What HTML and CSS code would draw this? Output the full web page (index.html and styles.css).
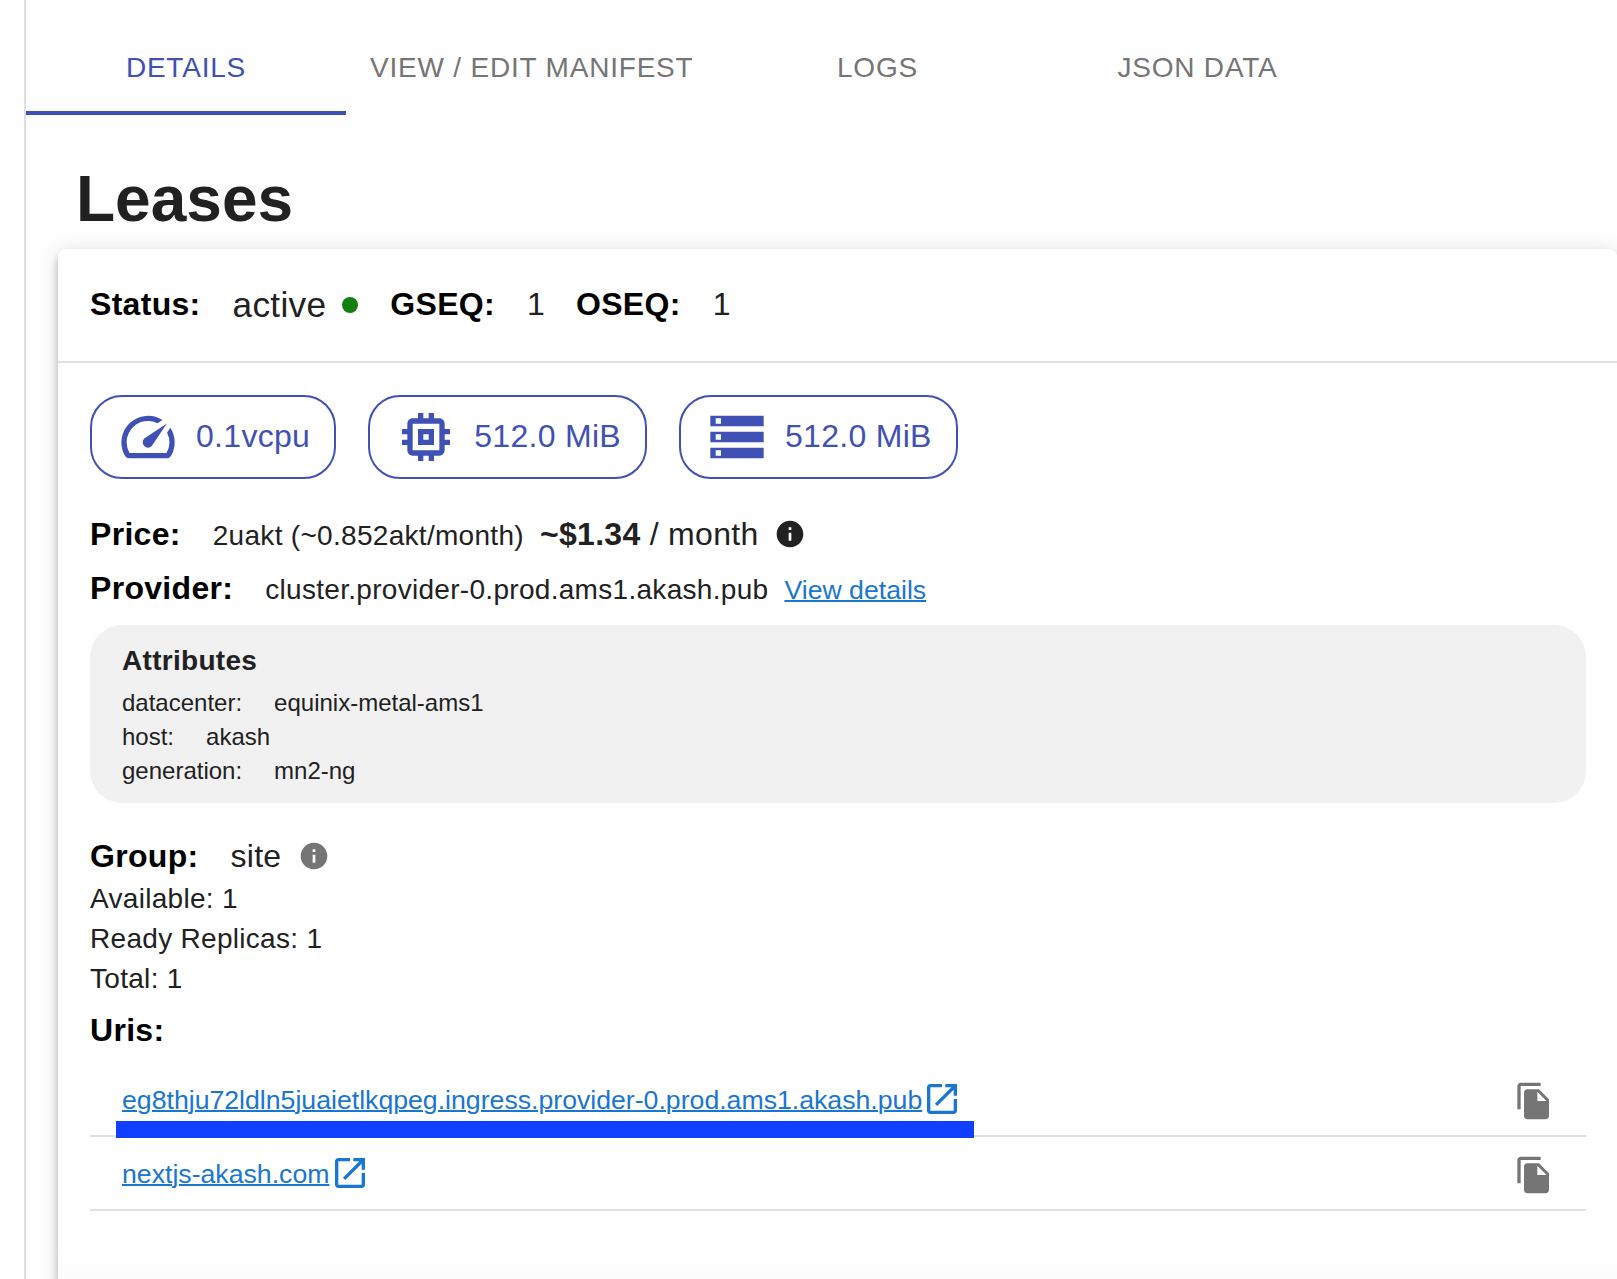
FILE: index.html
```html
<!DOCTYPE html>
<html lang="en">
<head>
<meta charset="utf-8">
<title>Leases</title>
<link rel="stylesheet" href="styles.css">
</head>
<body>
<svg class="sprite" aria-hidden="true">
  <symbol id="speed" viewBox="0 0 24 24"><path d="M20.38 8.57l-1.23 1.85a8 8 0 0 1-.22 7.58H5.07A8 8 0 0 1 15.58 6.85l1.85-1.23A10 10 0 0 0 3.35 19a2 2 0 0 0 1.72 1h13.85a2 2 0 0 0 1.74-1 10 10 0 0 0-.27-10.44zm-9.79 6.84a2 2 0 0 0 2.83 0l5.66-8.49-8.49 5.66a2 2 0 0 0 0 2.83z"/></symbol>
  <symbol id="memory" viewBox="0 0 24 24"><path d="M15 9H9v6h6V9zm-2 4h-2v-2h2v2zm8-2V9h-2V7c0-1.1-.9-2-2-2h-2V3h-2v2h-2V3H9v2H7c-1.1 0-2 .9-2 2v2H3v2h2v2H3v2h2v2c0 1.1.9 2 2 2h2v2h2v-2h2v2h2v-2h2c1.1 0 2-.9 2-2v-2h2v-2h-2v-2h2zm-4 6H7V7h10v10z"/></symbol>
  <symbol id="storage" viewBox="0 0 24 24"><path d="M2 20h20v-4H2v4zm2-3h2v2H4v-2zM2 4v4h20V4H2zm4 3H4V5h2v2zm-4 7h20v-4H2v4zm2-3h2v2H4v-2z"/></symbol>
  <symbol id="info" viewBox="0 0 24 24"><path d="M12 2C6.48 2 2 6.48 2 12s4.48 10 10 10 10-4.48 10-10S17.52 2 12 2zm1 15h-2v-6h2v6zm0-8h-2V7h2v2z"/></symbol>
  <symbol id="open" viewBox="0 0 24 24"><path d="M19 19H5V5h7V3H5c-1.11 0-2 .9-2 2v14c0 1.1.89 2 2 2h14c1.1 0 2-.9 2-2v-7h-2v7zM14 3v2h3.59l-9.83 9.83 1.41 1.41L19 6.41V10h2V3h-7z"/></symbol>
  <symbol id="copy" viewBox="0 0 24 24"><path d="M16 1H4c-1.1 0-2 .9-2 2v14h2V3h12V1zm-1 4l6 6v10c0 1.1-.9 2-2 2H7.99C6.89 23 6 22.1 6 21l.01-14c0-1.1.89-2 1.99-2h7zm-1 7h5.5L14 6.500V12z"/></symbol>
</svg>
<main class="panel">
  <nav class="tabs">
    <div class="tab tab-active">DETAILS</div>
    <div class="tab tab-wide">VIEW / EDIT MANIFEST</div>
    <div class="tab">LOGS</div>
    <div class="tab">JSON DATA</div>
  </nav>
  <h1 class="title">Leases</h1>
  <section class="card">
    <header class="card-header">
      <span class="label status-label">Status:</span><span class="status-value">active</span><span class="dot"></span>
      <span class="label">GSEQ:</span><span class="seq">1</span>
      <span class="label">OSEQ:</span><span class="seq">1</span>
    </header>
    <div class="card-body">
      <div class="chips">
        <div class="chip"><svg class="chip-icon"><use href="#speed"/></svg><span class="chip-text">0.1vcpu</span></div>
        <div class="chip"><svg class="chip-icon"><use href="#memory"/></svg><span class="chip-text">512.0 MiB</span></div>
        <div class="chip"><svg class="chip-icon"><use href="#storage"/></svg><span class="chip-text">512.0 MiB</span></div>
      </div>
      <div class="row">
        <span class="label">Price:</span><span class="value">2uakt (~0.852akt/month)</span><span class="cost"><b>~$1.34</b> / month</span><svg class="info info-dark"><use href="#info"/></svg>
      </div>
      <div class="row">
        <span class="label">Provider:</span><span class="value">cluster.provider-0.prod.ams1.akash.pub</span><a class="link details-link">View details</a>
      </div>
      <div class="attributes">
        <div class="attributes-title">Attributes</div>
        <div class="attribute"><span>datacenter:</span><span>equinix-metal-ams1</span></div>
        <div class="attribute"><span>host:</span><span>akash</span></div>
        <div class="attribute"><span>generation:</span><span>mn2-ng</span></div>
      </div>
      <div class="row group-row">
        <span class="label">Group:</span><span class="group-name">site</span><svg class="info info-muted"><use href="#info"/></svg>
      </div>
      <div class="counts">
        <div>Available: 1</div>
        <div>Ready Replicas: 1</div>
        <div>Total: 1</div>
      </div>
      <div class="label uris-label">Uris:</div>
      <ul class="uris">
        <li class="uri"><a class="link">eg8thju72ldln5juaietlkqpeg.ingress.provider-0.prod.ams1.akash.pub</a><svg class="open-icon"><use href="#open"/></svg><svg class="copy-icon"><use href="#copy"/></svg><span class="marker"></span></li>
        <li class="uri"><a class="link">nextjs-akash.com</a><svg class="open-icon"><use href="#open"/></svg><svg class="copy-icon"><use href="#copy"/></svg></li>
      </ul>
    </div>
  </section>
</main>
</body>
</html>
```
FILE: styles.css
```css
* { box-sizing: border-box; }
html { overflow: hidden; }
body {
  margin: 0;
  height: 1279px;
  overflow: hidden;
  background: #fefefe;
  color: #212121;
  font-family: "Liberation Sans", Arial, sans-serif;
  font-size: 32px;
  letter-spacing: 0.3px;
}
svg { display: block; flex: none; fill: currentColor; }
.sprite { position: absolute; width: 0; height: 0; }

.panel {
  margin-left: 24px;
  height: 1279px;
  padding-top: 19px;
  border-left: 2px solid #e0e0e0;
}
.tabs { display: flex; height: 96px; }
.tab {
  width: 320px;
  line-height: 98px;
  text-align: center;
  color: #757575;
  font-size: 28px;
  letter-spacing: 0.8px;
}
.tab-wide { width: 371.5px; }
.tab-active { color: #3f51b5; border-bottom: 4px solid #3f51b5; }

.title {
  margin: 46px 0 12px 50px;
  font-size: 64px;
  line-height: 76px;
  font-weight: 700;
  letter-spacing: 0;
}

.card {
  margin-left: 32px;
  height: 1100px;
  background: linear-gradient(#fff 1000px, #fcfcfc 1030px);
  border-radius: 8px;
  box-shadow: 0 4px 8px -2px rgba(0,0,0,.2), 0 8px 10px rgba(0,0,0,.14), 0 2px 20px rgba(0,0,0,.12);
}
.card-header {
  display: flex;
  align-items: center;
  height: 114px;
  padding-left: 32px;
  border-bottom: 2px solid #e0e0e0;
}
.label { color: #000; font-weight: 700; margin-right: 32px; }
.card-header .label, .seq { padding-bottom: 2px; }
.status-value { font-size: 35.2px; }
.dot { width: 16px; height: 16px; margin: 0 32px 0 16px; border-radius: 50%; background: #118011; }
.seq { margin: 0 31px 0 0; }

.card-body { padding: 32px 31px 0 32px; }
.chips { display: flex; gap: 32px; margin-bottom: 28px; }
.chip {
  display: flex;
  align-items: center;
  height: 84px;
  padding: 0 24px;
  border: 2px solid #3f51b5;
  border-radius: 32px;
  color: #3f51b5;
}
.chip-icon { width: 64px; height: 64px; margin-right: 16px; }
.chip-text { padding-bottom: 2px; }

.row { display: flex; align-items: baseline; height: 54px; line-height: 54px; }
.value { font-size: 28px; margin-right: 16px; }
.info { width: 32px; height: 32px; align-self: center; }
.info-dark { color: #212121; margin-left: 15px; }
.info-muted { color: #757575; margin-left: 17px; }
.link {
  color: #1976d2;
  font-size: 26.66px;
  letter-spacing: 0;
  text-decoration: underline;
  text-decoration-thickness: 2px;
}

.attributes {
  height: 178px;
  margin: 10px 0 33px;
  padding: 16px 32px;
  border-radius: 32px;
  background: #f1f1f1;
}
.attributes-title { margin-bottom: 5px; font-size: 28px; line-height: 40px; font-weight: 700; }
.attribute { display: flex; gap: 32px; font-size: 24px; line-height: 34px; letter-spacing: 0; }

.group-row { height: 40px; line-height: 40px; }
.counts { margin: 3px 0 11px; font-size: 28px; line-height: 40px; }
.uris-label { line-height: 40px; }

.uris { margin: 13px 0 0; padding: 0; list-style: none; }
.uri {
  position: relative;
  display: flex;
  align-items: center;
  height: 74px;
  padding: 0 32px;
  border-bottom: 2px solid #e0e0e0;
}
.uri .link { padding-top: 2px; }
.open-icon { width: 40px; height: 40px; margin-left: 0.2px; color: #1976d2; }
.copy-icon { width: 40px; height: 40px; margin: 4px 0 0 auto; color: #757575; }
.marker {
  position: absolute;
  left: 26px;
  top: 58px;
  z-index: 1;
  width: 858px;
  height: 17px;
  background: #103fff;
}
```
